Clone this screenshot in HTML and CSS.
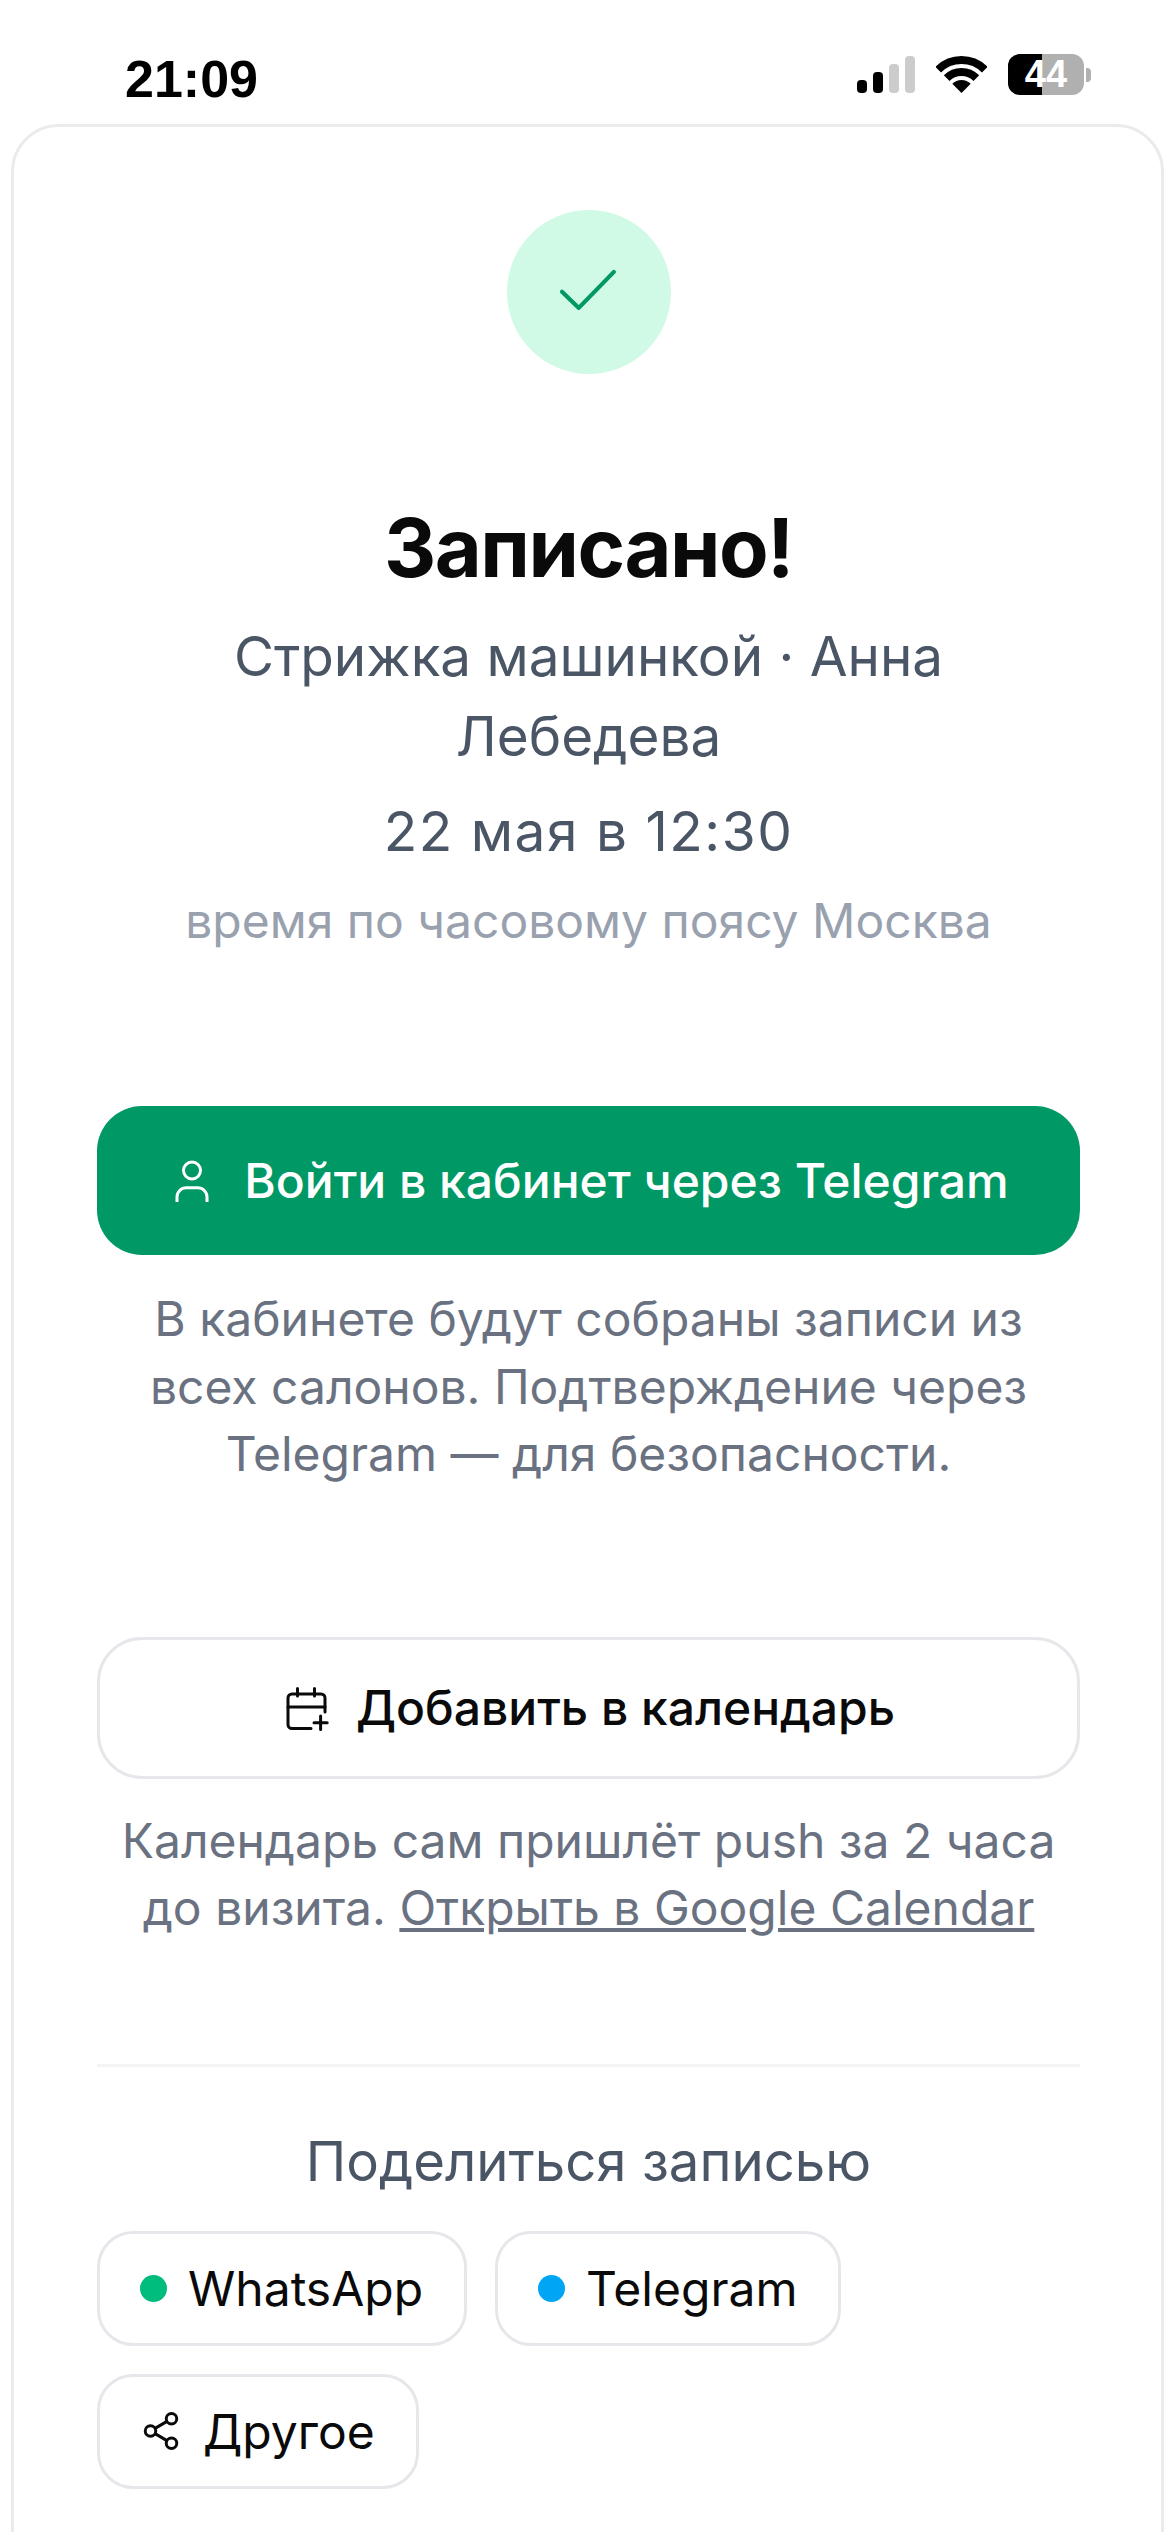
FILE: index.html
```html
<!DOCTYPE html>
<html lang="ru">
<head>
    <meta charset="UTF-8">
    <meta name="viewport" content="width=device-width, initial-scale=1.0">
    <title>Записано!</title>
    <link rel="stylesheet" href="styles.css">
</head>
<body>

    <div class="status-bar">
        <span class="clock">21:09</span>
        <div class="status-icons">
            <svg class="signal" width="58" height="38" viewBox="0 0 58 38">
                <rect x="0" y="24" width="10" height="13" rx="4" fill="#000"/>
                <rect x="16" y="16" width="10" height="21" rx="4" fill="#000"/>
                <rect x="32" y="8" width="10" height="29" rx="4" fill="#ccc"/>
                <rect x="48" y="0" width="10" height="37" rx="4" fill="#ccc"/>
            </svg>
            <svg class="wifi" width="51" height="38" viewBox="0 0 51 38">
                <path d="M2.2 13.7 A33 33 0 0 1 48.8 13.7" fill="none" stroke="#000" stroke-width="8"/>
                <path d="M10.65 22.15 A21 21 0 0 1 40.35 22.15" fill="none" stroke="#000" stroke-width="8"/>
                <path d="M25.5 37 L16.3 27.8 A13 13 0 0 1 34.7 27.8 Z" fill="#000"/>
            </svg>
            <div class="battery">
                <div class="battery-body"><span class="battery-fill"></span><span class="battery-level">44</span></div>
                <span class="battery-cap"></span>
            </div>
        </div>
    </div>

    <main class="card">
        <div class="check-circle">
            <svg width="72" height="72" viewBox="0 0 24 24" fill="none" stroke="#009966" stroke-width="1.4" stroke-linecap="round" stroke-linejoin="round">
                <path d="M3 11.9 L8.6 17.3 L20.3 5.3"/>
            </svg>
        </div>

        <h1 class="title">Записано!</h1>
        <p class="service">Стрижка машинкой · Анна Лебедева</p>
        <p class="when">22 мая в 12:30</p>
        <p class="timezone">время по часовому поясу Москва</p>

        <a class="btn btn-primary">
            <svg width="48" height="48" viewBox="0 0 24 24" fill="none" stroke="#fff" stroke-width="1.5">
                <circle cx="12" cy="6.75" r="4.25"/>
                <path d="M4.5 22.5 V20 A4.6 4.6 0 0 1 9.1 15.4 H14.9 A4.6 4.6 0 0 1 19.5 20 V22.5"/>
            </svg>
            Войти в кабинет через Telegram
        </a>
        <p class="note note-cabinet">В кабинете будут собраны записи из всех салонов. Подтверждение через Telegram — для безопасности.</p>

        <a class="btn btn-outline">
            <svg width="48" height="48" viewBox="0 0 24 24" fill="none" stroke="#0a0a0a" stroke-width="1.5" stroke-linecap="round">
                <path d="M21.5 14 V7 A2 2 0 0 0 19.5 5 H5 A2 2 0 0 0 3 7 V20.3 A2 2 0 0 0 5 22.3 H14.5"/>
                <path d="M7.75 2.2 V6 M16.25 2.2 V6 M3 11.5 H21.5 M19.3 16 V22.8 M16 19.4 H22.6"/>
            </svg>
            Добавить в календарь
        </a>
        <p class="note note-calendar">Календарь сам пришлёт push за 2 часа до визита. <a class="link">Открыть в Google Calendar</a></p>

        <hr class="divider">

        <h2 class="share-title">Поделиться записью</h2>
        <div class="share-row">
            <a class="chip"><span class="dot dot-whatsapp"></span>WhatsApp</a>
            <a class="chip"><span class="dot dot-telegram"></span>Telegram</a>
            <a class="chip">
                <svg width="42" height="42" viewBox="0 0 24 24" fill="none" stroke="#0a0a0a" stroke-width="1.7">
                    <circle cx="18" cy="5" r="3"/>
                    <circle cx="6" cy="12" r="3"/>
                    <circle cx="18" cy="19" r="3"/>
                    <path d="M8.6 10.5 L15.4 6.5 M8.6 13.5 L15.4 17.5"/>
                </svg>
                Другое
            </a>
        </div>
    </main>

</body>
</html>
```

FILE: styles.css
```css
* {
    box-sizing: border-box;
}

html, body {
    margin: 0;
    height: 2532px;
    overflow: hidden;
}

body {
    font-family: Inter, "Noto Sans", sans-serif;
    background: #fff;
    color: #0a0a0a;
}

/* status bar */
.status-bar {
    height: 124px;
    padding: 54px 79px 0 125px;
    display: flex;
    justify-content: space-between;
    align-items: flex-start;
}

.clock {
    font-family: "Liberation Sans", sans-serif;
    font-size: 52px;
    font-weight: 700;
    line-height: 50px;
    color: #000;
}

.status-icons {
    display: flex;
    align-items: center;
    gap: 21px;
}

.battery {
    display: flex;
    align-items: center;
}

.battery-body {
    position: relative;
    width: 76px;
    height: 41px;
    border-radius: 12px;
    background: #b0b0b0;
    overflow: hidden;
    text-align: center;
}

.battery-fill {
    position: absolute;
    left: 0;
    top: 0;
    bottom: 0;
    width: 34px;
    background: #000;
}

.battery-level {
    position: relative;
    font-family: "Liberation Sans", sans-serif;
    font-size: 38px;
    font-weight: 700;
    line-height: 41px;
    color: #fff;
}

.battery-cap {
    width: 5px;
    height: 14px;
    margin-left: 2px;
    border-radius: 0 4px 4px 0;
    background: #b0b0b0;
}

/* card */
.card {
    margin: 0 6px 0 11px;
    height: 2500px;
    padding: 83px 81px 0 83px;
    background: #fff;
    border: 3px solid #ebebeb;
    border-radius: 48px;
    text-align: center;
}

.check-circle {
    width: 164px;
    height: 164px;
    margin: 0 auto;
    border-radius: 50%;
    background: #d0fae5;
    display: flex;
    align-items: center;
    justify-content: center;
}

.title {
    margin: 124px 0 0;
    font-size: 81px;
    font-weight: 700;
    line-height: 100px;
    letter-spacing: -1.5px;
}

.service {
    margin: 18px auto 0;
    max-width: 800px;
    font-size: 54.8px;
    line-height: 80px;
    color: #4a5565;
}

.when {
    margin: 15px 0 0;
    font-size: 55px;
    line-height: 81px;
    letter-spacing: 1.5px;
    color: #4a5565;
}

.timezone {
    margin: 15px 0 0;
    font-size: 48px;
    line-height: 68px;
    color: #99a1af;
}

.btn {
    display: flex;
    align-items: center;
    justify-content: center;
    gap: 28px;
    text-decoration: none;
}

.btn-primary {
    height: 149px;
    margin-top: 151px;
    border-radius: 45px;
    background: #009966;
    color: #fff;
    font-size: 48px;
    font-weight: 500;
}

.note {
    font-size: 48px;
    line-height: 67.5px;
    color: #6a7282;
}

.note-cabinet {
    margin: 30px 0 0;
}

.btn-outline {
    height: 142px;
    margin-top: 149px;
    gap: 26px;
    border: 3px solid #e5e7eb;
    border-radius: 45px;
    color: #0a0a0a;
    font-size: 48px;
    font-weight: 500;
}

.note-calendar {
    margin: 28px 0 0;
}

.link {
    color: #6a7282;
    text-decoration: underline;
}

.divider {
    margin: 122px 0 0;
    border: 0;
    border-top: 3px solid #f3f4f6;
}

.share-title {
    margin: 54px 0 0;
    font-size: 54.5px;
    font-weight: 400;
    line-height: 81px;
    color: #4a5565;
}

.share-row {
    display: flex;
    flex-wrap: wrap;
    gap: 28px;
    margin-top: 29px;
}

.chip {
    height: 115px;
    padding: 0 41px 0 40px;
    display: flex;
    align-items: center;
    gap: 21px;
    border: 3px solid #e5e7eb;
    border-radius: 36px;
    font-size: 48px;
    color: #0a0a0a;
}

.dot {
    width: 27px;
    height: 27px;
    border-radius: 50%;
}

.dot-whatsapp {
    background: #00bc7d;
}

.dot-telegram {
    background: #00a6f4;
}
```
